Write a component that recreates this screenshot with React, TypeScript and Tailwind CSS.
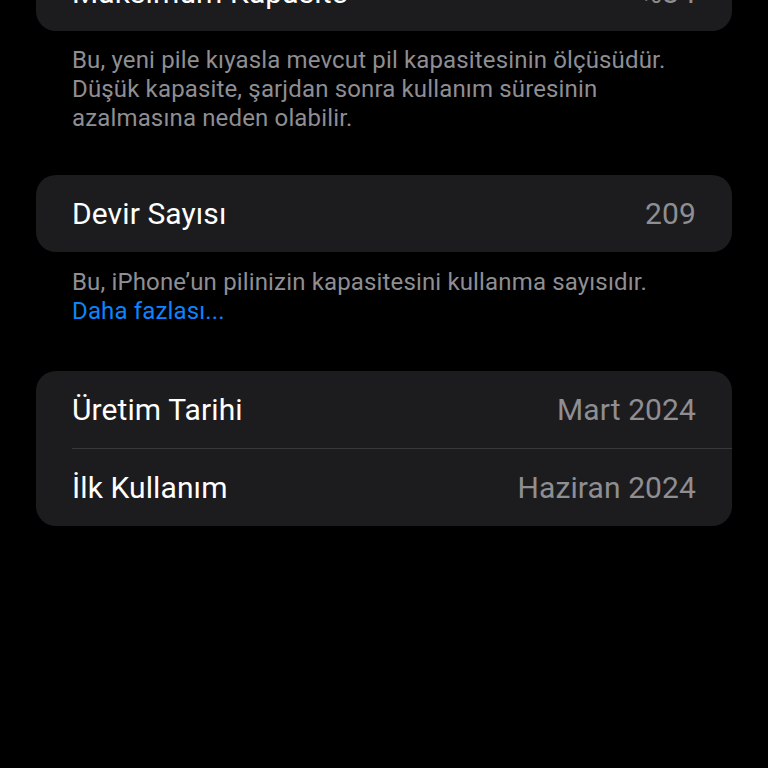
import React from "react";

interface Row {
  label: string;
  value: string;
}

const font = { fontFamily: "Roboto, 'Noto Sans', sans-serif" };

const Group: React.FC<{ rows: Row[]; className?: string }> = ({
  rows,
  className = "",
}) => {
  return (
    <div className={`mx-[36px] rounded-[20px] bg-[#1c1c1e] ${className}`}>
      {rows.map((row, i) => (
        <div key={row.label} className="pl-[36px]">
          <div
            className={`flex h-[77px] items-center justify-between pr-[36px] ${
              i > 0 ? "h-[78px] border-t border-[#38383a]" : ""
            }`}
          >
            <span className="text-[30px] tracking-[0.1px] text-white">
              {row.label}
            </span>
            <span className="text-[30px] tracking-[0.1px] text-[#8e8e93]">
              {row.value}
            </span>
          </div>
        </div>
      ))}
    </div>
  );
};

const Footer: React.FC<{ children: React.ReactNode; className?: string }> = ({
  children,
  className = "",
}) => (
  <p
    className={`px-[72px] text-[24px] leading-[29px] tracking-[0.15px] text-[#8e8e93] ${className}`}
  >
    {children}
  </p>
);

export default function App() {
  return (
    <div
      className="h-[768px] w-[768px] overflow-hidden bg-black antialiased"
      style={font}
    >
      <Group
        className="-mt-[46px]"
        rows={[{ label: "Maksimum Kapasite", value: "%84" }]}
      />
      <Footer className="pt-[15px]">
        Bu, yeni pile kıyasla mevcut pil kapasitesinin ölçüsüdür.
        <br />
        Düşük kapasite, şarjdan sonra kullanım süresinin
        <br />
        azalmasına neden olabilir.
      </Footer>

      <Group className="mt-[42px]" rows={[{ label: "Devir Sayısı", value: "209" }]} />
      <Footer className="pt-[16px]">
        Bu, iPhone’un pilinizin kapasitesini kullanma sayısıdır.
        <br />
        <span className="text-[#0a84ff]">Daha fazlası...</span>
      </Footer>

      <Group
        className="mt-[45px]"
        rows={[
          { label: "Üretim Tarihi", value: "Mart 2024" },
          { label: "İlk Kullanım", value: "Haziran 2024" },
        ]}
      />
    </div>
  );
}
